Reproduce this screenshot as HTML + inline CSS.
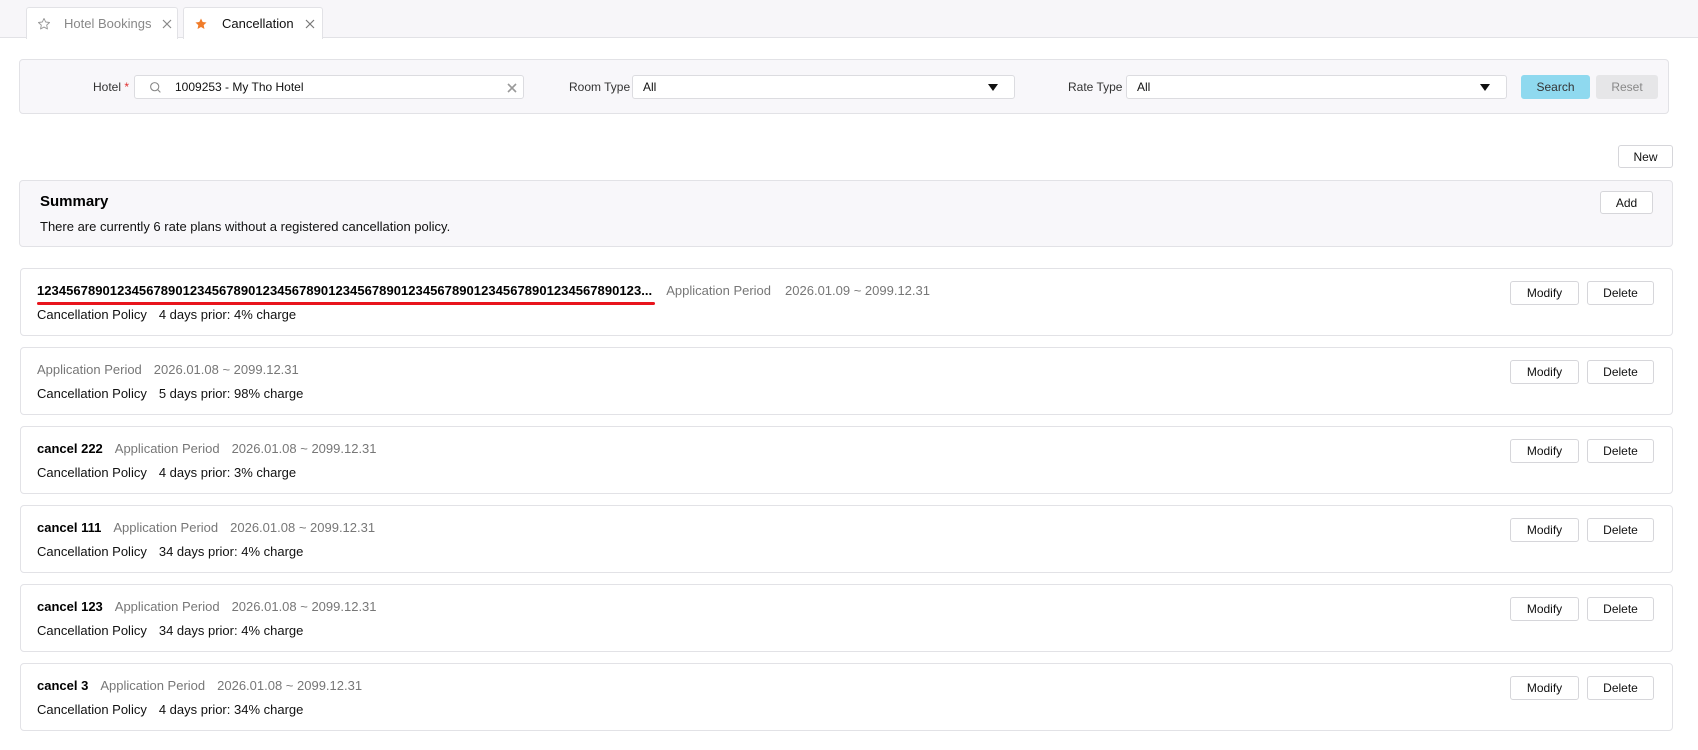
<!DOCTYPE html>
<html><head><meta charset="utf-8"><style>
*{box-sizing:border-box;margin:0;padding:0}
body{width:1698px;height:750px;background:#fff;font-family:"Liberation Sans",sans-serif;font-size:13px;color:#111;position:relative;overflow:hidden}
.abs{position:absolute}
.tabbar{left:0;top:0;width:1698px;height:38px;background:#f7f6f9;border-bottom:1px solid #e2e2e6}
.tab{position:absolute;top:7px;height:32px;background:#fff;border:1px solid #e2e2e6;border-bottom:none;border-radius:3px 3px 0 0;display:flex;align-items:center;font-size:13px}
.x{margin-left:11px;display:inline-block}
.box{position:absolute;background:#f8f7fa;border:1px solid #e2e2e6;border-radius:4px}
.inp{position:absolute;background:#fff;border:1px solid #dcdce0;border-radius:3px;height:24px;display:flex;align-items:center;font-size:12px;padding-left:10px}
.lbl{position:absolute;font-size:12px;color:#333}
.btn{position:absolute;background:#fff;border:1px solid #d6d6da;border-radius:3px;display:flex;align-items:center;justify-content:center;font-size:12px;color:#111}
.card{position:absolute;left:20px;width:1653px;height:68px;border:1px solid #e2e2e6;border-radius:4px;background:#fff}
.r1{position:absolute;left:16px;top:14px;white-space:nowrap;font-size:13px}
.r2{position:absolute;left:16px;top:38px;white-space:nowrap;font-size:13px}
.g{color:#777}
.b{font-weight:bold;color:#000}
.tri{position:absolute;width:0;height:0;border-left:5px solid transparent;border-right:5px solid transparent;border-top:7px solid #111}
</style></head><body>
<div class="abs tabbar"></div>
<div class="tab" style="left:26px;width:152px;color:#888;padding-left:10px">
<svg width="14" height="14" viewBox="0 0 24 24"><path d="M12 2.5l2.9 6.1 6.6.8-4.9 4.5 1.3 6.6L12 17.2l-5.9 3.3 1.3-6.6-4.9-4.5 6.6-.8z" fill="none" stroke="#999" stroke-width="1.6" stroke-linejoin="round"/></svg>
<span style="margin-left:13px">Hotel Bookings</span><svg class="x" width="10" height="10" viewBox="0 0 10 10"><path d="M1 1L9 9M9 1L1 9" stroke="#888" stroke-width="1.2"/></svg></div>
<div class="tab" style="left:183px;width:140px;color:#111;padding-left:10px">
<svg width="14" height="14" viewBox="0 0 24 24"><path d="M12 2.5l2.9 6.1 6.6.8-4.9 4.5 1.3 6.6L12 17.2l-5.9 3.3 1.3-6.6-4.9-4.5 6.6-.8z" fill="#f07c2a"/></svg>
<span style="margin-left:14px">Cancellation</span><svg class="x" width="10" height="10" viewBox="0 0 10 10"><path d="M1 1L9 9M9 1L1 9" stroke="#777" stroke-width="1.2"/></svg></div>

<div class="box" style="left:19px;top:59px;width:1650px;height:55px"></div>
<div class="lbl" style="left:93px;top:80px">Hotel <span style="color:#e03030">*</span></div>
<div class="inp" style="left:134px;top:75px;width:390px;padding-left:14px">
<svg width="13" height="13" viewBox="0 0 24 24"><circle cx="10.5" cy="10.5" r="7.5" fill="none" stroke="#888" stroke-width="2"/><path d="M16 16l5 5" stroke="#888" stroke-width="2"/></svg>
<span style="margin-left:13px;color:#111">1009253 - My Tho Hotel</span>
<svg style="position:absolute;right:6px;top:7px" width="10" height="10" viewBox="0 0 10 10"><path d="M1 1L9 9M9 1L1 9" stroke="#999" stroke-width="1.6"/></svg></div>
<div class="lbl" style="left:569px;top:80px">Room Type</div>
<div class="inp" style="left:632px;top:75px;width:383px">All<div class="tri" style="right:16px;top:8px"></div></div>
<div class="lbl" style="left:1068px;top:80px">Rate Type</div>
<div class="inp" style="left:1126px;top:75px;width:381px">All<div class="tri" style="right:16px;top:8px"></div></div>
<div class="btn" style="left:1521px;top:75px;width:69px;height:24px;background:#8fd9ef;border-color:#8fd9ef;color:#333">Search</div>
<div class="btn" style="left:1596px;top:75px;width:62px;height:24px;background:#e6e6e8;border-color:#e6e6e8;color:#888">Reset</div>

<div class="btn" style="left:1618px;top:145px;width:55px;height:23px">New</div>

<div class="box" style="left:19px;top:180px;width:1654px;height:67px"></div>
<div class="abs" style="left:40px;top:193px;font-size:15px;font-weight:bold;color:#000">Summary</div>
<div class="abs" style="left:40px;top:219px;font-size:13px">There are currently 6 rate plans without a registered cancellation policy.</div>
<div class="btn" style="left:1600px;top:191px;width:53px;height:23px">Add</div>

<div class="card" style="top:268px">
<div class="r1"><span class="b" style="letter-spacing:0.05px">12345678901234567890123456789012345678901234567890123456789012345678901234567890123...</span><span class="g" style="margin-left:14px">Application Period</span><span class="g" style="margin-left:14px">2026.01.09 ~ 2099.12.31</span></div>
<div class="abs" style="left:16px;top:33px;width:618px;height:3px;background:#e8141c;border-radius:2px"></div>
<div class="r2">Cancellation Policy<span style="margin-left:12px">4 days prior: 4% charge</span></div>
<div class="btn" style="left:1489px;top:12px;width:69px;height:24px">Modify</div>
<div class="btn" style="left:1566px;top:12px;width:67px;height:24px">Delete</div>
</div>

<div class="card" style="top:347px">
<div class="r1"><span class="g">Application Period</span><span class="g" style="margin-left:12px">2026.01.08 ~ 2099.12.31</span></div>
<div class="r2">Cancellation Policy<span style="margin-left:12px">5 days prior: 98% charge</span></div>
<div class="btn" style="left:1489px;top:12px;width:69px;height:24px">Modify</div>
<div class="btn" style="left:1566px;top:12px;width:67px;height:24px">Delete</div>
</div>

<div class="card" style="top:426px">
<div class="r1"><span class="b">cancel 222</span><span class="g" style="margin-left:12px">Application Period</span><span class="g" style="margin-left:12px">2026.01.08 ~ 2099.12.31</span></div>
<div class="r2">Cancellation Policy<span style="margin-left:12px">4 days prior: 3% charge</span></div>
<div class="btn" style="left:1489px;top:12px;width:69px;height:24px">Modify</div>
<div class="btn" style="left:1566px;top:12px;width:67px;height:24px">Delete</div>
</div>

<div class="card" style="top:505px">
<div class="r1"><span class="b">cancel 111</span><span class="g" style="margin-left:12px">Application Period</span><span class="g" style="margin-left:12px">2026.01.08 ~ 2099.12.31</span></div>
<div class="r2">Cancellation Policy<span style="margin-left:12px">34 days prior: 4% charge</span></div>
<div class="btn" style="left:1489px;top:12px;width:69px;height:24px">Modify</div>
<div class="btn" style="left:1566px;top:12px;width:67px;height:24px">Delete</div>
</div>

<div class="card" style="top:584px">
<div class="r1"><span class="b">cancel 123</span><span class="g" style="margin-left:12px">Application Period</span><span class="g" style="margin-left:12px">2026.01.08 ~ 2099.12.31</span></div>
<div class="r2">Cancellation Policy<span style="margin-left:12px">34 days prior: 4% charge</span></div>
<div class="btn" style="left:1489px;top:12px;width:69px;height:24px">Modify</div>
<div class="btn" style="left:1566px;top:12px;width:67px;height:24px">Delete</div>
</div>

<div class="card" style="top:663px">
<div class="r1"><span class="b">cancel 3</span><span class="g" style="margin-left:12px">Application Period</span><span class="g" style="margin-left:12px">2026.01.08 ~ 2099.12.31</span></div>
<div class="r2">Cancellation Policy<span style="margin-left:12px">4 days prior: 34% charge</span></div>
<div class="btn" style="left:1489px;top:12px;width:69px;height:24px">Modify</div>
<div class="btn" style="left:1566px;top:12px;width:67px;height:24px">Delete</div>
</div>
</body></html>
